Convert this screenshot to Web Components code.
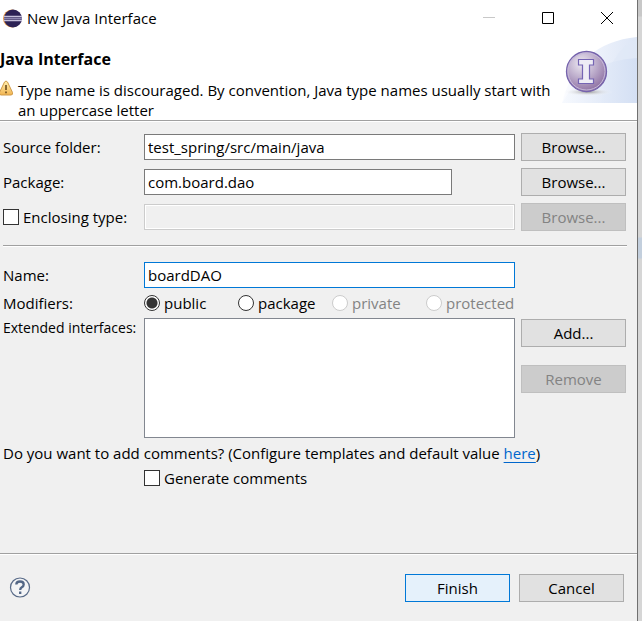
<!DOCTYPE html>
<html lang="en">
<head>
<meta charset="utf-8">
<title>New Java Interface</title>
<style>
  html, body { height: 100%; margin: 0; }
  body {
    font: 15px/20px "Open Sans", "Noto Sans", sans-serif;
    color: #000;
    background: #d6d6d6;
  }
</style>
</head>
<body>
<wizard-dialog>
  <title-bar slot="title">New Java Interface</title-bar>
  <wizard-header slot="header" heading="Java Interface">Type name is discouraged. By convention, Java type names usually start with an uppercase letter</wizard-header>
  <text-row label="Source folder:" value="test_spring/src/main/java">
    <push-button>Browse...</push-button>
  </text-row>
  <text-row label="Package:" value="com.board.dao" short>
    <push-button>Browse...</push-button>
  </text-row>
  <text-row label="Enclosing type:" optional disabled>
    <push-button disabled>Browse...</push-button>
  </text-row>
  <line-separator></line-separator>
  <text-row label="Name:" value="boardDAO" active></text-row>
  <modifier-row></modifier-row>
  <list-row label="Extended interfaces:">
    <push-button>Add...</push-button>
    <push-button disabled>Remove</push-button>
  </list-row>
  <comment-options></comment-options>
  <wizard-footer slot="footer">
    <push-button primary>Finish</push-button>
    <push-button>Cancel</push-button>
  </wizard-footer>
</wizard-dialog>

<script>
const RESET = `
  *, *::before { box-sizing: border-box; }
  input, button, select { font: inherit; color: inherit; margin: 0; border-radius: 0; }
  input[type=checkbox], input[type=radio] {
    appearance: none; flex: none; width: 16px; height: 16px;
    background: #fff; border: 1px solid #333;
  }
  input[type=radio] { border-radius: 50%; }
  input[type=radio]:checked { background: radial-gradient(circle, #333 0 5px, #fff 6px); }
  input[type=radio]:disabled { border-color: #ccc; }
`;

function define(name, render) {
  customElements.define(name, class extends HTMLElement {
    constructor() {
      super();
      this.attachShadow({ mode: 'open' });
    }
    connectedCallback() {
      const template = document.createElement('template');
      template.innerHTML = `<style>${RESET}</style>` + render(this);
      this.shadowRoot.replaceChildren(template.content.cloneNode(true));
    }
  });
}

define('wizard-dialog', () => `
  <style>
    :host { display: block; min-height: 100%; padding-right: 4px;
      background: linear-gradient(#c8c8c8 0 16px, #d6d6d6 17px 237px, #c3cfdd 238px 258px, #d6d6d6 259px); }
    .window { display: flex; flex-direction: column; min-height: 100vh;
      background: #f0f0f0; border-right: 1px solid #707070; }
    main { flex: 1; display: flex; flex-direction: column; padding: 12px 10px 0 3px; }
    ::slotted(text-row) { margin-bottom: 7px; }
  </style>
  <div class="window">
    <slot name="title"></slot>
    <slot name="header"></slot>
    <main><slot></slot></main>
    <slot name="footer"></slot>
  </div>`);

define('title-bar', () => `
  <style>
    :host { display: flex; align-items: center; height: 36px; padding: 0 1px 0 3px; background: #fff; }
    .name { flex: 1; padding-left: 5px; }
    button { display: grid; place-items: center; width: 59px; height: 36px; padding: 0; border: 0; background: none; }
    svg { display: block; }
  </style>
  <svg width="19" height="19" viewBox="0 0 19 19" aria-hidden="true">
    <circle cx="9" cy="9.500" r="9" fill="#e8953f"/>
    <circle cx="10" cy="9.500" r="9" fill="#2c2255"/>
    <path d="M1 7.500h18M1 11.500h18" stroke="#c5c0da" stroke-width="1.500"/>
    <path d="M1 9.500h18" stroke="#8d86b0" stroke-width="1.500"/>
  </svg>
  <span class="name"><slot></slot></span>
  <button type="button" aria-label="Minimize" disabled>
    <svg width="12" height="12"><path d="M0 5.500h12" stroke="#c8c8c8"/></svg>
  </button>
  <button type="button" aria-label="Maximize">
    <svg width="12" height="12"><path d="M.5.5h11v11H.5z" fill="none" stroke="#000"/></svg>
  </button>
  <button type="button" aria-label="Close">
    <svg width="12" height="12"><path d="M0 0l12 12M12 0L0 12" stroke="#000"/></svg>
  </button>`);

define('wizard-header', host => `
  <style>
    :host { display: flex; background: #fff; border-bottom: 1px solid #a0a0a0; box-shadow: 0 1px #fff; }
    .text { flex: 1; padding-top: 13px; }
    h1 { margin: 0; font-size: 16px; line-height: 20px; }
    .message { display: flex; margin: 11px 0 0; }
    .message svg { flex: none; margin-right: 4px; }
    .banner { flex: none; display: block; width: 76px; height: 66px; margin-top: 1px; }
  </style>
  <div class="text">
    <h1>${host.getAttribute('heading')}</h1>
    <p class="message">
      <svg width="14" height="16" viewBox="0 0 14 16" aria-hidden="true">
        <defs><linearGradient id="w" x2="0" y2="1"><stop stop-color="#fff0b0"/><stop offset="1" stop-color="#f2b552"/></linearGradient></defs>
        <path d="M4.500 2Q6 0 7.500 2l5 10.500Q13 15 11 15H1Q-1 15-.5 12.500z" fill="url(#w)" stroke="#d09a48"/>
        <path d="M6 5v5M6 11.500v1.800" stroke="#6b4a1c" stroke-width="1.600"/>
      </svg>
      <span><slot></slot></span>
    </p>
  </div>
  <svg class="banner" viewBox="0 0 76 66" aria-hidden="true">
    <defs>
      <linearGradient id="a"><stop stop-color="#fbfcff"/><stop offset="1" stop-color="#dde6f6"/></linearGradient>
      <linearGradient id="b"><stop stop-color="#f6f9fe"/><stop offset="1" stop-color="#d2def3"/></linearGradient>
      <radialGradient id="c" cx=".38" cy=".3" r=".75"><stop stop-color="#eeeaf2"/><stop offset=".5" stop-color="#bcaccb"/><stop offset="1" stop-color="#8b6c9f"/></radialGradient>
      <radialGradient id="s"><stop stop-color="#999"/><stop offset="1" stop-color="#fff" stop-opacity="0"/></radialGradient>
    </defs>
    <path d="M1 66Q16 6 76 0v66z" fill="url(#a)"/>
    <path d="M40 66Q46 16 76 1v65z" fill="#dfe8f7" opacity=".7"/>
    <path d="M1 66Q24 24 76 21v45z" fill="url(#b)" opacity=".85"/>
    <ellipse cx="27" cy="55" rx="25" ry="4" fill="url(#s)"/>
    <circle cx="25.500" cy="34.500" r="20" fill="url(#c)" stroke="#7563ad" stroke-width="1.300"/>
    <circle cx="25.500" cy="34.500" r="18.500" fill="none" stroke="#c5b9da" stroke-width="1"/>
    <path d="M17.500 22.500h15v5.500h-4v14h4v4.500h-15v-4.500h4v-14h-4z" fill="#eeecf5" stroke="#7564b4" stroke-width="1.200"/>
  </svg>`);

define('push-button', host => `
  <style>
    :host { display: block; width: 105px; }
    button { display: block; width: 100%; height: 28px; padding: 0; line-height: 20px;
      background: #e1e1e1; border: 1px solid #adadad; }
    :host([primary]) button { background: #e5f1fb; border-color: #0078d7; }
    button:disabled { color: #838383; background: #ccc; border-color: #bfbfbf; }
  </style>
  <button type="button" ${host.hasAttribute('disabled') ? 'disabled' : ''}><slot></slot></button>`);

define('text-row', host => {
  const label = host.getAttribute('label');
  const disabled = host.hasAttribute('disabled') ? 'disabled' : '';
  const caption = host.hasAttribute('optional')
    ? `<label class="check"><input type="checkbox">${label}</label>`
    : `<label for="field">${label}</label>`;
  return `
  <style>
    :host { display: grid; grid-template-columns: 141px 1fr 105px; align-items: center; min-height: 28px; padding-right: 1px; }
    .check { display: flex; align-items: center; gap: 4px; }
    .cell { padding-right: 6px; }
    #field { display: block; width: 100%; height: 26px; padding: 0 3px; background: #fff; border: 1px solid #7a7a7a; outline: 0; }
    #field:disabled { background: #f0f0f0; border-color: #ccc; box-shadow: inset 0 0 0 1px #fff; }
    :host([short]) .cell { padding-right: 69px; }
    :host([active]) #field { border-color: #0078d7; }
  </style>
  ${caption}
  <div class="cell"><input id="field" type="text" aria-label="${label}" value="${host.getAttribute('value') || ''}" ${disabled}></div>
  <slot></slot>`;
});

define('line-separator', () => `
  <style>
    :host { display: block; height: 2px; margin: 7px 0 14px; background: #fff; border-top: 1px solid #a0a0a0; box-sizing: border-box; }
  </style>`);

define('modifier-row', () => `
  <style>
    :host { display: block; margin-top: -3px; }
    fieldset { display: grid; grid-template-columns: 141px repeat(4, 94px); margin: 0; padding: 0; border: 0; }
    label { display: flex; align-items: center; gap: 4px; }
    .off { color: #838383; }
  </style>
  <fieldset aria-label="Modifiers">
    <span>Modifiers:</span>
    <label><input type="radio" name="m" checked>public</label>
    <label><input type="radio" name="m">package</label>
    <label class="off"><input type="radio" name="m" disabled>private</label>
    <label class="off"><input type="radio" name="m" disabled>protected</label>
  </fieldset>`);

define('list-row', host => `
  <style>
    :host { display: grid; grid-template-columns: 141px 1fr 105px; margin-top: 5px; padding-right: 1px; }
    label { font-size: 14px; white-space: nowrap; }
    .cell { padding-right: 6px; }
    select { appearance: none; display: block; width: 100%; height: 120px; background: #fff; border: 1px solid #828790; }
    .actions { display: grid; align-content: start; gap: 18px; padding-top: 1px; }
  </style>
  <label for="list">${host.getAttribute('label')}</label>
  <div class="cell"><select id="list" size="5"></select></div>
  <div class="actions"><slot></slot></div>`);

define('comment-options', () => `
  <style>
    :host { display: block; margin-top: 5px; }
    p { margin: 0; }
    a { color: #0066cc; text-underline-offset: 3px; }
    label { display: flex; align-items: center; gap: 4px; margin: 5px 0 0 141px; }
  </style>
  <p>Do you want to add comments? (Configure templates and default value <a href="#templates">here</a>)</p>
  <label><input type="checkbox">Generate comments</label>`);

define('wizard-footer', () => `
  <style>
    :host { display: flex; align-items: center; gap: 9px; height: 68px; padding: 0 13px 0 9px;
      border-top: 1px solid #a0a0a0; box-shadow: inset 0 1px #fff; box-sizing: border-box; }
    .help { margin-right: auto; padding: 0; border: 0; background: none; }
    .help svg { display: block; }
  </style>
  <button class="help" type="button" aria-label="Help">
    <svg width="22" height="22" viewBox="0 0 22 22">
      <circle cx="11" cy="10.500" r="9.500" fill="#f3f4f6" stroke="#596b88" stroke-width="1.200"/>
      <path d="M7.300 7.500Q7.400 4.500 11 4.500q3.700 0 3.700 2.900 0 1.700-1.900 2.800Q11.200 11.100 11.200 13M11.200 14.500v2.500" fill="none" stroke="#526686" stroke-width="2.300"/>
    </svg>
  </button>
  <slot></slot>`);
</script>
</body>
</html>
